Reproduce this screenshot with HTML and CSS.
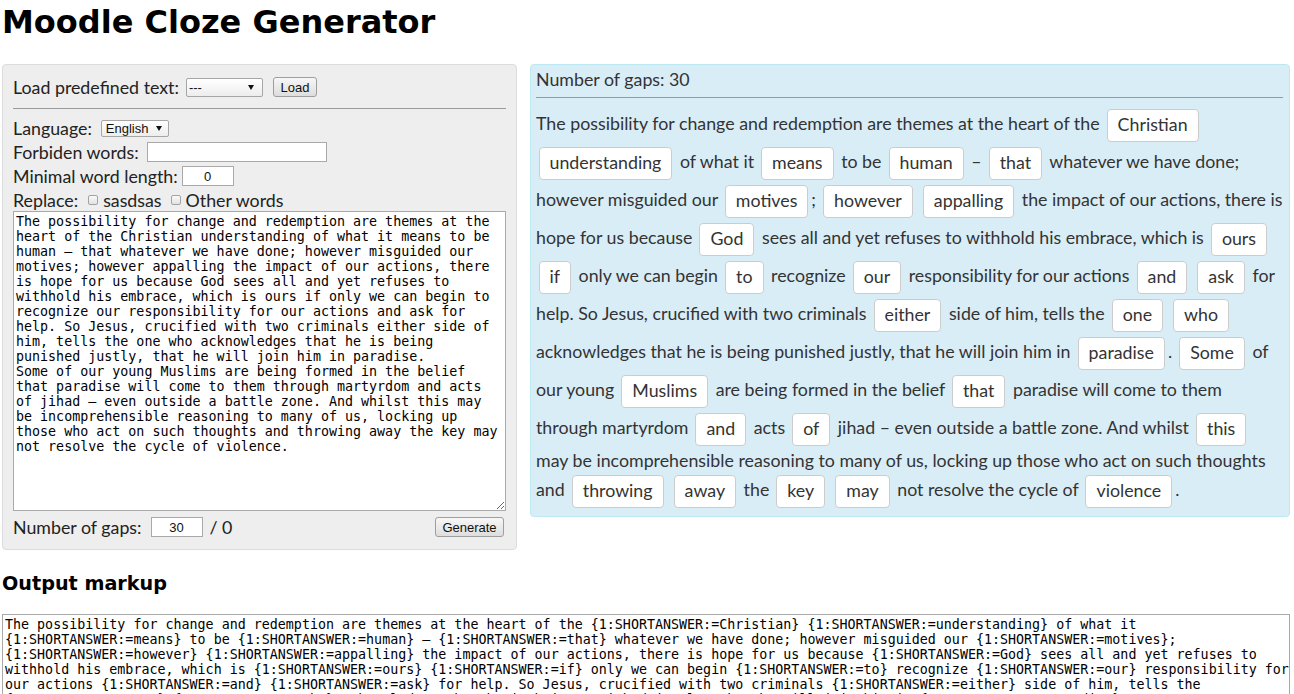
FILE: index.html
```html
<!DOCTYPE html>
<html>
<head>
<meta charset="utf-8">
<title>Moodle Cloze Generator</title>
<link rel="stylesheet" href="styles.css">
</head>
<body>
<h1 class="title">Moodle Cloze Generator</h1>
<div class="main">
  <div class="panel-left">
    <div class="row">
      <span class="label">Load predefined text:</span>
      <span class="sel sel-wide"><select class="select"><option>---</option></select></span>
      <button class="btn btn-load">Load</button>
    </div>
    <hr class="rule">
    <div class="row">
      <span class="label">Language:</span>
      <span class="sel sel-lang"><select class="select"><option>English</option></select></span>
    </div>
    <div class="row">
      <span class="label">Forbiden words:</span>
      <input class="field field-long" type="text">
    </div>
    <div class="row">
      <span class="label">Minimal word length:</span>
      <input class="field field-num field-min" type="text" value="0">
    </div>
    <div class="row row-replace">
      <span class="label">Replace:</span>
      <label class="check"><input type="checkbox" class="cb">sasdsas</label>
      <label class="check"><input type="checkbox" class="cb">Other words</label>
    </div>
    <textarea class="source">The possibility for change and redemption are themes at the heart of the Christian understanding of what it means to be human – that whatever we have done; however misguided our motives; however appalling the impact of our actions, there is hope for us because God sees all and yet refuses to withhold his embrace, which is ours if only we can begin to recognize our responsibility for our actions and ask for help. So Jesus, crucified with two criminals either side of him, tells the one who acknowledges that he is being punished justly, that he will join him in paradise.
Some of our young Muslims are being formed in the belief that paradise will come to them through martyrdom and acts of jihad – even outside a battle zone. And whilst this may be incomprehensible reasoning to many of us, locking up those who act on such thoughts and throwing away the key may not resolve the cycle of violence.</textarea>
    <div class="row row-gen">
      <span class="label">Number of gaps:</span>
      <input class="field field-num" type="text" value="30">
      <span class="label">/ 0</span>
      <button class="btn btn-gen">Generate</button>
    </div>
  </div>
  <div class="panel-right">
    <div class="count">Number of gaps: 30</div>
    <hr class="rule rule-right">
    <div class="cloze">The possibility for change and redemption are themes at the heart of the <span class="gap">Christian</span><br>
<span class="gap">understanding</span> of what it <span class="gap">means</span> to be <span class="gap">human</span> – <span class="gap">that</span> whatever we have done;<br>
however misguided our <span class="gap">motives</span>; <span class="gap">however</span> <span class="gap">appalling</span> the impact of our actions, there is<br>
hope for us because <span class="gap">God</span> sees all and yet refuses to withhold his embrace, which is <span class="gap">ours</span><br>
<span class="gap">if</span> only we can begin <span class="gap">to</span> recognize <span class="gap">our</span> responsibility for our actions <span class="gap">and</span> <span class="gap">ask</span> for<br>
help. So Jesus, crucified with two criminals <span class="gap">either</span> side of him, tells the <span class="gap">one</span> <span class="gap">who</span><br>
acknowledges that he is being punished justly, that he will join him in <span class="gap">paradise</span>. <span class="gap">Some</span> of<br>
our young <span class="gap">Muslims</span> are being formed in the belief <span class="gap">that</span> paradise will come to them<br>
through martyrdom <span class="gap">and</span> acts <span class="gap">of</span> jihad – even outside a battle zone. And whilst <span class="gap">this</span><br>
may be incomprehensible reasoning to many of us, locking up those who act on such thoughts<br>
and <span class="gap">throwing</span> <span class="gap">away</span> the <span class="gap">key</span> <span class="gap">may</span> not resolve the cycle of <span class="gap">violence</span>.</div>
  </div>
</div>
<h3 class="subtitle">Output markup</h3>
<textarea class="output" wrap="off">The possibility for change and redemption are themes at the heart of the {1:SHORTANSWER:=Christian} {1:SHORTANSWER:=understanding} of what it
{1:SHORTANSWER:=means} to be {1:SHORTANSWER:=human} – {1:SHORTANSWER:=that} whatever we have done; however misguided our {1:SHORTANSWER:=motives};
{1:SHORTANSWER:=however} {1:SHORTANSWER:=appalling} the impact of our actions, there is hope for us because {1:SHORTANSWER:=God} sees all and yet refuses to
withhold his embrace, which is {1:SHORTANSWER:=ours} {1:SHORTANSWER:=if} only we can begin {1:SHORTANSWER:=to} recognize {1:SHORTANSWER:=our} responsibility for
our actions {1:SHORTANSWER:=and} {1:SHORTANSWER:=ask} for help. So Jesus, crucified with two criminals {1:SHORTANSWER:=either} side of him, tells the
{1:SHORTANSWER:=one} {1:SHORTANSWER:=who} acknowledges that he is being punished justly, that he will join him in {1:SHORTANSWER:=paradise}.
{1:SHORTANSWER:=Some} of our young {1:SHORTANSWER:=Muslims} are being formed in the belief {1:SHORTANSWER:=that} paradise will come to them through
martyrdom {1:SHORTANSWER:=and} acts {1:SHORTANSWER:=of} jihad – even outside a battle zone. And whilst {1:SHORTANSWER:=this} may be incomprehensible
reasoning to many of us, locking up those who act on such thoughts and {1:SHORTANSWER:=throwing} {1:SHORTANSWER:=away} the {1:SHORTANSWER:=key}
{1:SHORTANSWER:=may} not resolve the cycle of {1:SHORTANSWER:=violence}.</textarea>
</body>
</html>
```
FILE: styles.css
```css
html, body {
  margin: 0;
  background: #fff;
}
body {
  padding: 0 4px 0 2px;
  font-family: Lato, "Noto Sans", sans-serif;
  font-size: 17.8px;
  color: #222;
}
.title {
  margin: 4px 0 0;
  font-family: "DejaVu Sans", sans-serif;
  font-weight: bold;
  font-size: 32px;
  line-height: 37px;
  color: #000;
}
.main {
  margin-top: 23px;
  display: grid;
  grid-template-columns: 515px 1fr;
  column-gap: 13px;
  align-items: start;
}
.panel-left {
  box-sizing: border-box;
  background: #eeeeee;
  border: 1px solid #dcdcdc;
  border-radius: 4px;
  padding: 10px;
}
.row {
  display: flex;
  align-items: center;
  height: 24px;
  gap: 7px;
  white-space: nowrap;
}
.label {
  line-height: 24px;
}
.row-replace {
  height: 23px;
}
.rule {
  border: 0;
  border-top: 1px solid #9a9a9a;
  height: 0;
  margin: 9px 0 7px;
}
.sel {
  position: relative;
  display: inline-block;
}
.sel::after {
  content: "";
  position: absolute;
  top: 50%;
  margin-top: -2px;
  border-left: 3px solid transparent;
  border-right: 3px solid transparent;
  border-top: 5px solid #111;
  pointer-events: none;
}
.select {
  -webkit-appearance: none;
  appearance: none;
  display: block;
  box-sizing: border-box;
  border: 1px solid #a6a6a6;
  border-radius: 2px;
  background: linear-gradient(#ffffff, #ededed);
  font-family: "Liberation Sans", Arial, sans-serif;
  font-size: 13px;
  color: #111;
  margin: 0;
}
.sel-wide .select {
  width: 77px;
  height: 19px;
  padding: 0 0 0 2px;
}
.sel-wide::after {
  right: 9px;
}
.sel-lang {
  margin-left: 2px;
}
.sel-lang .select {
  width: 68px;
  height: 17px;
  padding: 0 0 0 4px;
  line-height: 15px;
}
.sel-lang::after {
  right: 7px;
}
.btn {
  box-sizing: border-box;
  height: 20px;
  padding: 0 6px;
  border: 1px solid #9e9e9e;
  border-radius: 3px;
  background: linear-gradient(#f7f7f7, #dddddd);
  font-family: "Liberation Sans", Arial, sans-serif;
  font-size: 13px;
  color: #111;
  margin: 0;
}
.btn-load {
  width: 44px;
  margin-left: 3px;
}
.btn-gen {
  width: 69px;
  margin-left: auto;
  margin-right: 2px;
}
.field {
  box-sizing: border-box;
  height: 20px;
  border: 1px solid #a9a9a9;
  background: #fff;
  font-family: "Liberation Sans", Arial, sans-serif;
  font-size: 13px;
  color: #111;
  margin: 0 0 0 1px;
  padding: 0 2px;
}
.field-long {
  width: 180px;
}
.field-num {
  width: 52px;
  text-align: center;
}
.field-min {
  margin-left: -3px;
}
.check {
  display: flex;
  align-items: center;
  margin-left: 3px;
}
.check + .check {
  margin-left: 2px;
}
.cb {
  -webkit-appearance: none;
  appearance: none;
  box-sizing: border-box;
  width: 10px;
  height: 10px;
  margin: 1px 5px 0 0;
  border: 1px solid #a3a3a3;
  border-radius: 2px;
  background: linear-gradient(#fafafa, #e2e2e2);
}
.source {
  display: block;
  box-sizing: border-box;
  width: 100%;
  height: 300px;
  margin: 0;
  padding: 2px;
  border: 1px solid #a9a9a9;
  background: #fff;
  font-family: "DejaVu Sans Mono", monospace;
  font-size: 13.333px;
  line-height: 15px;
  color: #000;
  resize: vertical;
}
.row-gen {
  margin-top: 4px;
}
.row-gen .field-num {
  margin-left: 2px;
}
.panel-right {
  box-sizing: border-box;
  background: #d9edf7;
  border: 1px solid #bce8f1;
  border-radius: 4px;
  padding: 2px 6px 6px 5px;
  color: #333;
}
.count {
  line-height: 24px;
}
.rule-right {
  margin: 6px 0 8px;
}
.cloze {
  line-height: 24px;
  margin-right: -5px;
}
.gap {
  display: inline-block;
  box-sizing: border-box;
  height: 33px;
  line-height: 28px;
  padding: 0 10px 3px;
  margin: 2.5px 3px 2.5px 2.5px;
  border: 1px solid #cccccc;
  border-radius: 4px;
  background: #fff;
  vertical-align: middle;
}
.subtitle {
  margin: 23px 0 19px;
  font-family: "DejaVu Sans", sans-serif;
  font-weight: bold;
  font-size: 19.2px;
  line-height: 22px;
  color: #000;
}
.output {
  display: block;
  box-sizing: border-box;
  width: 1288px;
  height: 200px;
  margin: 0;
  padding: 2px;
  border: 1px solid #a9a9a9;
  background: #fff;
  font-family: "DejaVu Sans Mono", monospace;
  font-size: 13.333px;
  line-height: 15px;
  color: #000;
  white-space: pre;
  overflow: hidden;
  resize: none;
}
```
